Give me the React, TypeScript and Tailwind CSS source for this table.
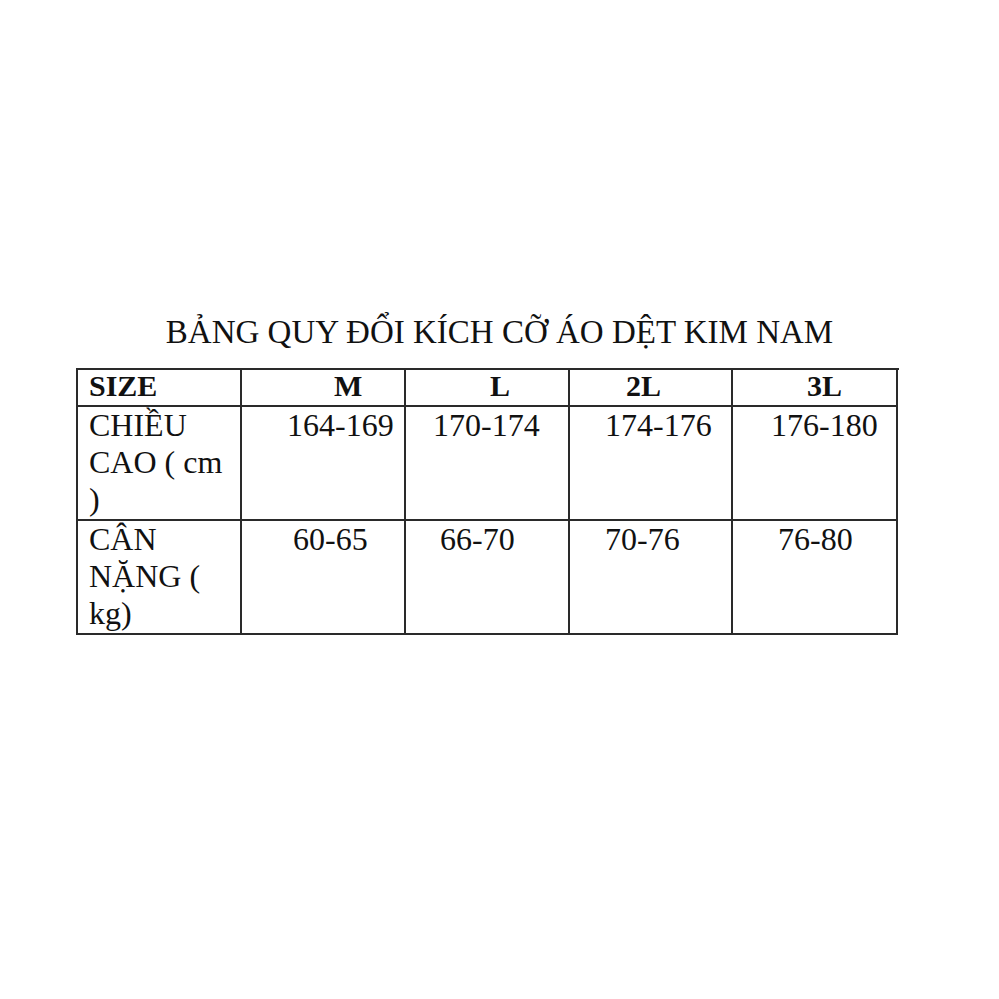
import React from 'react';

const header = [
  { text: 'SIZE', pad: 'pl-[11px]' },
  { text: 'M', pad: 'pl-[92px]' },
  { text: 'L', pad: 'pl-[84px]' },
  { text: '2L', pad: 'pl-[56px]' },
  { text: '3L', pad: 'pl-[74px]' },
];

const rows = [
  [
    { text: 'CHIỀU CAO ( cm )', pad: 'pl-[11px] pr-[10px]' },
    { text: '164-169', pad: 'pl-[45px]' },
    { text: '170-174', pad: 'pl-[27px]' },
    { text: '174-176', pad: 'pl-[35px]' },
    { text: '176-180', pad: 'pl-[38px]' },
  ],
  [
    { text: 'CÂN NẶNG ( kg)', pad: 'pl-[11px] pr-[10px]' },
    { text: '60-65', pad: 'pl-[51px]' },
    { text: '66-70', pad: 'pl-[34px]' },
    { text: '70-76', pad: 'pl-[35px]' },
    { text: '76-80', pad: 'pl-[45px]' },
  ],
];

const App = () => {
  return (
    <div className="min-h-[999px] w-[999px] bg-white text-[#111] font-['Liberation_Serif',serif] pt-[314px]">
      {/* Title */}
      <h1 className="text-center text-[33px] leading-[36px] font-normal">
        BẢNG QUY ĐỔI KÍCH CỠ ÁO DỆT KIM NAM
      </h1>

      {/* Size table */}
      <div className="mt-[18px] ml-[76px] w-[823px] border-l-2 border-t-2 border-[#2a2a2a] grid grid-cols-[164px_164px_164px_163px_165px]">
        {header.map((c) => (
          <div
            key={c.text}
            className={`h-[37px] border-r-2 border-b-2 border-[#2a2a2a] font-bold text-[30px] leading-[31px] ${c.pad}`}
          >
            {c.text}
          </div>
        ))}
        {rows.map((row) =>
          row.map((c) => (
            <div
              key={c.text}
              className={`h-[114px] border-r-2 border-b-2 border-[#2a2a2a] text-[32px] leading-[37px] ${c.pad}`}
            >
              {c.text}
            </div>
          ))
        )}
      </div>
    </div>
  );
};

export default App;
